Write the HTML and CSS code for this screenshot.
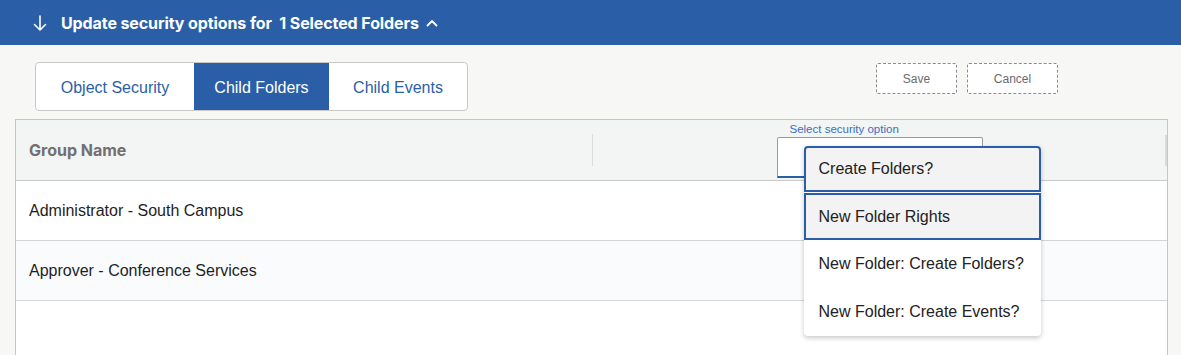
FILE: index.html
```html
<!DOCTYPE html>
<html lang="en">
<head>
    <meta charset="UTF-8">
    <meta name="viewport" content="width=device-width, initial-scale=1.0">
    <title>Folder Security</title>
    <link rel="stylesheet" href="styles.css">
</head>
<body>
    <div class="update-bar">
        <svg class="arrow-down" width="14" height="16" viewBox="0 0 14 16">
            <path d="M7 1v14M1.5 9.5L7 15l5.5-5.5" fill="none" stroke="#fff" stroke-width="1.6" stroke-linecap="round" stroke-linejoin="round"/>
        </svg>
        <span class="update-title">Update security options for&nbsp; 1 Selected Folders</span>
        <svg class="chevron-up" width="12" height="8" viewBox="0 0 12 8">
            <path d="M1.5 6.5L6 2l4.5 4.5" fill="none" stroke="#fff" stroke-width="1.8" stroke-linecap="round" stroke-linejoin="round"/>
        </svg>
    </div>

    <div class="toolbar">
        <div class="tabs">
            <div class="tab tab-object">Object Security</div>
            <div class="tab tab-folders active">Child Folders</div>
            <div class="tab tab-events">Child Events</div>
        </div>
        <div class="actions">
            <button class="btn btn-save">Save</button>
            <button class="btn btn-cancel">Cancel</button>
        </div>
    </div>

    <div class="grid">
        <div class="grid-head">
            <div class="head-cell head-name">Group Name</div>
            <div class="head-cell head-option">
                <div class="select-wrap">
                    <label class="select-label">Select security option</label>
                    <div class="select-box"></div>
                    <ul class="dropdown">
                        <li class="option focused">Create Folders?</li>
                        <li class="option focused">New Folder Rights</li>
                        <li class="option">New Folder: Create Folders?</li>
                        <li class="option">New Folder: Create Events?</li>
                    </ul>
                </div>
            </div>
        </div>
        <div class="grid-row">Administrator - South Campus</div>
        <div class="grid-row alt">Approver - Conference Services</div>
        <div class="grid-row"></div>
    </div>
</body>
</html>
```

FILE: styles.css
```css
body {
    margin: 0;
    background-color: #f7f7f6;
    font-family: "Liberation Sans", Arial, sans-serif;
    overflow: hidden;
    height: 355px;
}

/* top bar */
.update-bar {
    display: flex;
    align-items: center;
    height: 45px;
    padding-left: 33px;
    background-color: #2a5fa7;
    color: white;
}
.arrow-down {
    margin-right: 14px;
}
.update-title {
    font-family: Inter, "Open Sans", sans-serif;
    font-weight: 700;
    font-size: 16px;
    letter-spacing: -0.1px;
}
.chevron-up {
    margin-left: 7px;
    margin-top: 1px;
}

/* tabs + buttons */
.toolbar {
    display: flex;
    align-items: flex-start;
    padding: 17px 123px 0 35px;
}
.tabs {
    display: flex;
    height: 47px;
    border: 1px solid #c9c9c9;
    border-radius: 4px;
    background-color: white;
    overflow: hidden;
}
.tab {
    display: flex;
    align-items: center;
    justify-content: center;
    font-size: 16px;
    color: #2a5fa7;
    padding-top: 2px;
}
.tab-object {
    width: 158px;
}
.tab-folders {
    width: 135px;
}
.tab-events {
    width: 138px;
}
.tab.active {
    background-color: #2a5fa7;
    color: white;
}
.actions {
    display: flex;
    gap: 10px;
    margin-left: auto;
    margin-top: 1px;
}
.btn {
    height: 31px;
    border: 1px dashed #8c8c8c;
    border-radius: 2px;
    background-color: white;
    font-family: "Liberation Sans", Arial, sans-serif;
    font-size: 12px;
    color: #6b6b6b;
}
.btn-save {
    width: 81px;
}
.btn-cancel {
    width: 91px;
}

/* grid */
.grid {
    margin: 8px 13px 0 15px;
    border: 1px solid #c4c6c8;
    border-bottom: none;
    background-color: white;
}
.grid-head {
    display: grid;
    grid-template-columns: 577px 1fr;
    grid-template-rows: 60px;
    background-color: #f3f4f4;
    border-bottom: 1px solid #c8cacc;
}
.head-cell {
    display: flex;
    align-items: center;
}
.head-name {
    padding-left: 13px;
    font-family: Inter, "Open Sans", sans-serif;
    font-weight: 700;
    font-size: 16px;
    color: #707070;
    border-right: 1px solid #dcdcdc;
    margin: 14px 0;
}
.head-option {
    justify-content: center;
    align-items: flex-start;
    position: relative;
}
.head-option::after {
    content: "";
    position: absolute;
    right: 0;
    top: 15px;
    height: 31px;
    border-right: 2px solid #dadada;
}
.select-wrap {
    position: relative;
    width: 206px;
    margin-left: -1px;
    margin-top: 3px;
}
.select-label {
    display: block;
    padding-left: 13px;
    font-size: 11.5px;
    color: #3b6fc0;
    line-height: 12px;
    margin-bottom: 2px;
}
.select-box {
    height: 38px;
    background-color: white;
    border: 1px solid #9a9a9a;
    border-bottom: 2px solid #2a5fa7;
    border-radius: 2px 2px 0 0;
}
.dropdown {
    position: absolute;
    left: 27px;
    top: 23px;
    width: 237px;
    margin: 0;
    padding: 0;
    list-style: none;
    background-color: white;
    border-radius: 4px;
    box-shadow: 0 2px 5px rgba(0, 0, 0, 0.22);
    z-index: 2;
}
.option {
    display: flex;
    align-items: center;
    height: 48px;
    padding-left: 15px;
    font-size: 16px;
    color: #222;
}
.option.focused {
    height: 43px;
    padding-left: 13px;
    border: 2px solid #2a5fa7;
    background-color: #f3f3f3;
}
.option.focused:first-child {
    height: 42px;
    border-radius: 4px 4px 0 0;
    margin-bottom: 1px;
}

.grid-row {
    display: flex;
    align-items: center;
    height: 59px;
    padding-left: 13px;
    font-size: 16px;
    color: #1e1e1e;
    border-bottom: 1px solid #d3d5d7;
}
.grid-row.alt {
    background-color: #fafbfd;
}
```
